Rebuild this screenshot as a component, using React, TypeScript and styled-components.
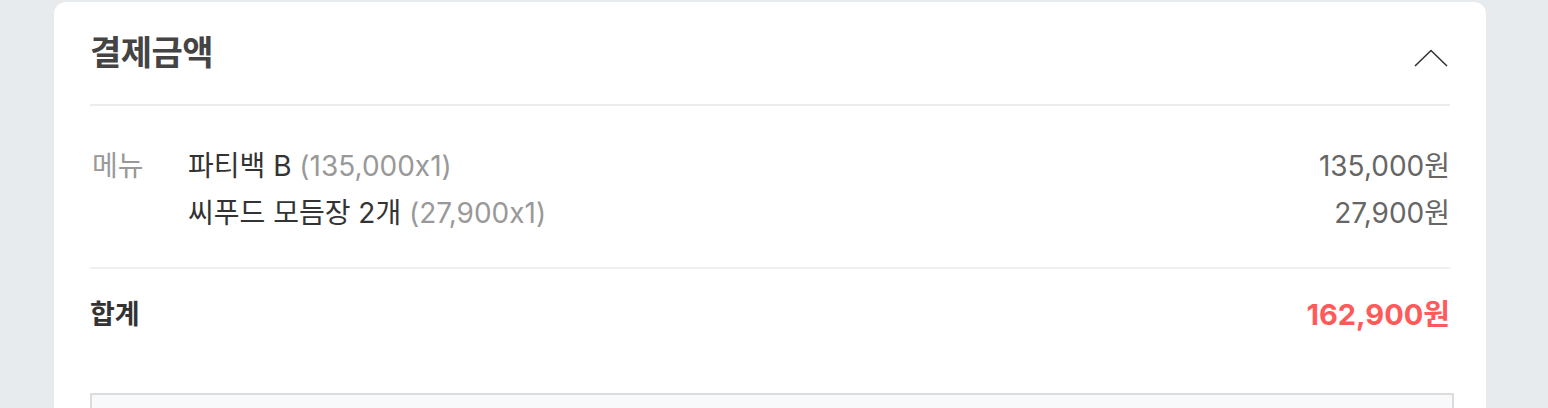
import React from "react";
import styled, { createGlobalStyle } from "styled-components";

const Global = createGlobalStyle`
  html, body { margin: 0; padding: 0; }
  body {
    background: #e8ebee;
    font-family: "Inter", "Noto Sans CJK KR", "Noto Sans", sans-serif;
    font-feature-settings: "calt" 0;
    -webkit-font-smoothing: antialiased;
  }
`;

const Page = styled.div`
  padding: 2px 62px 0 54px;
  height: 408px;
  box-sizing: border-box;
  overflow: hidden;
`;

const Card = styled.section`
  background: #fff;
  border-radius: 12px;
  padding: 0 36px;
  min-height: 500px;
`;

const Header = styled.div`
  height: 102px;
  display: flex;
  align-items: center;
  justify-content: space-between;
  border-bottom: 2px solid #ececec;
`;

const Title = styled.h2`
  margin: -6px 0 0;
  font-family: "Noto Sans CJK KR", sans-serif;
  font-size: 34px;
  font-weight: 700;
  color: #444;
  letter-spacing: -0.5px;
`;

const Chevron = styled.svg`
  width: 34px;
  height: 18px;
  margin-right: 2px;
  margin-top: 9px;
`;

const Section = styled.div<{ $pt: number; $pb: number; $border?: boolean }>`
  padding: ${(p) => p.$pt}px 0 ${(p) => p.$pb}px;
  ${(p) => (p.$border ? "border-bottom: 2px solid #f0f0f0;" : "")}
`;

const MenuGrid = styled.div`
  display: grid;
  grid-template-columns: 98px 1fr auto;
  font-size: 28px;
  line-height: 47px;
`;

const Label = styled.div`
  color: #999;
  padding-left: 2px;
`;

const Items = styled.div`
  display: flex;
  flex-direction: column;
`;

const ItemName = styled.div`
  color: #333;
`;

const Qty = styled.span`
  color: #999;
`;

const Prices = styled.div`
  display: flex;
  flex-direction: column;
  align-items: flex-end;
  color: #666;
`;

const TotalRow = styled.div`
  display: flex;
  justify-content: space-between;
  align-items: center;
  line-height: 44px;
`;

const TotalLabel = styled.div`
  font-size: 27px;
  font-weight: 700;
  color: #333;
`;

const TotalValue = styled.div`
  font-size: 29px;
  font-weight: 700;
  color: #ff5a5a;
`;

const NoticeBox = styled.div`
  margin-right: -4px;
  height: 60px;
  border: 2px solid #dcdcdc;
  background: #f8f9fb;
`;

const items = [
  { name: "파티백 B", qty: "(135,000x1)", price: "135,000원" },
  { name: "씨푸드 모듬장 2개", qty: "(27,900x1)", price: "27,900원" },
];

export default function App() {
  return (
    <>
      <Global />
      <Page>
        <Card>
          <Header>
            <Title>결제금액</Title>
            <Chevron viewBox="0 0 34 18" fill="none">
              <path d="M1 17 L17 1.5 L33 17" stroke="#333" strokeWidth="1.6" />
            </Chevron>
          </Header>
          <Section $pt={37} $pb={30} $border>
            <MenuGrid>
              <Label>메뉴</Label>
              <Items>
                {items.map((it) => (
                  <ItemName key={it.name}>
                    {it.name} <Qty>{it.qty}</Qty>
                  </ItemName>
                ))}
              </Items>
              <Prices>
                {items.map((it) => (
                  <div key={it.price}>{it.price}</div>
                ))}
              </Prices>
            </MenuGrid>
          </Section>
          <Section $pt={24} $pb={56}>
            <TotalRow>
              <TotalLabel>합계</TotalLabel>
              <TotalValue>162,900원</TotalValue>
            </TotalRow>
          </Section>
          <NoticeBox />
        </Card>
      </Page>
    </>
  );
}
